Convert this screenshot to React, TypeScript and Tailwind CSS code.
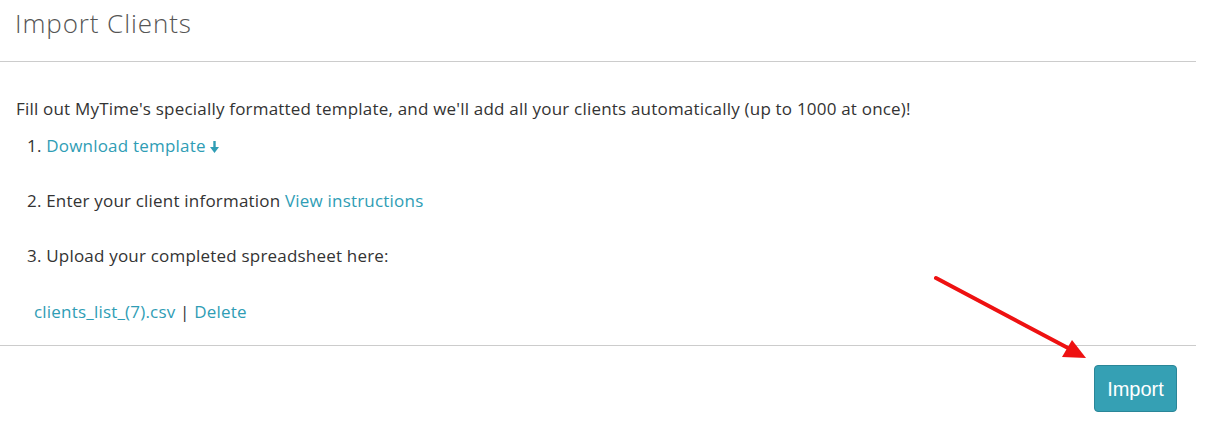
import React from 'react';

const linkCls = 'text-[#2f9db5] hover:underline cursor-pointer';

const DownArrow: React.FC = () => (
  <svg className="inline-block ml-[4px] align-[-1px]" width="9" height="12" viewBox="0 0 9 12">
    <rect x="3.3" y="0" width="2.4" height="7" fill="#2f9db5" />
    <polygon points="0,6 9,6 4.5,12" fill="#2f9db5" />
  </svg>
);

const ImportClients: React.FC = () => {
  return (
    <div className="relative w-[1219px] h-[431px] bg-white font-['Open_Sans',sans-serif] text-[#333]">
      <div className="w-[1196px]">
        <div className="h-[62px] border-b border-[#cccccc] pl-[15px] pt-[5px]">
          <h1 className="text-[26px] font-light text-[#555] leading-[36px] tracking-[0.9px]">Import Clients</h1>
        </div>

        <div className="pl-4 pt-[36px] pb-[22px] border-b border-[#cccccc] text-[17px] leading-[22px] tracking-[0.2px]">
          <p>Fill out MyTime's specially formatted template, and we'll add all your clients automatically (up to 1000 at once)!</p>
          <div className="pl-[11px] mt-[15px] flex flex-col gap-[33px]">
            <div>
              1. <span className={linkCls}>Download template</span>
              <DownArrow />
            </div>
            <div>
              2. Enter your client information <span className={linkCls}>View instructions</span>
            </div>
            <div className="mb-px">3. Upload your completed spreadsheet here:</div>
            <div className="pl-[7px]">
              <span className={linkCls}>clients_list_(7).csv</span> | <span className={linkCls}>Delete</span>
            </div>
          </div>
        </div>

        <div className="flex justify-end pr-[19px] pt-[19px]">
          <button className="w-[83px] h-[47px] rounded-[4px] bg-[#35a0b4] border border-[#2a8698] text-white text-[20px] font-['Liberation_Sans',Arial,sans-serif]">
            Import
          </button>
        </div>
      </div>

      <svg className="absolute left-0 top-0 pointer-events-none" width="1219" height="431">
        <line x1="936" y1="278" x2="1068" y2="348" stroke="#ee1111" strokeWidth="4" strokeLinecap="round" />
        <polygon points="1086,358 1062,357 1072,340" fill="#ee1111" />
      </svg>
    </div>
  );
};

export default function App() {
  return <ImportClients />;
}
